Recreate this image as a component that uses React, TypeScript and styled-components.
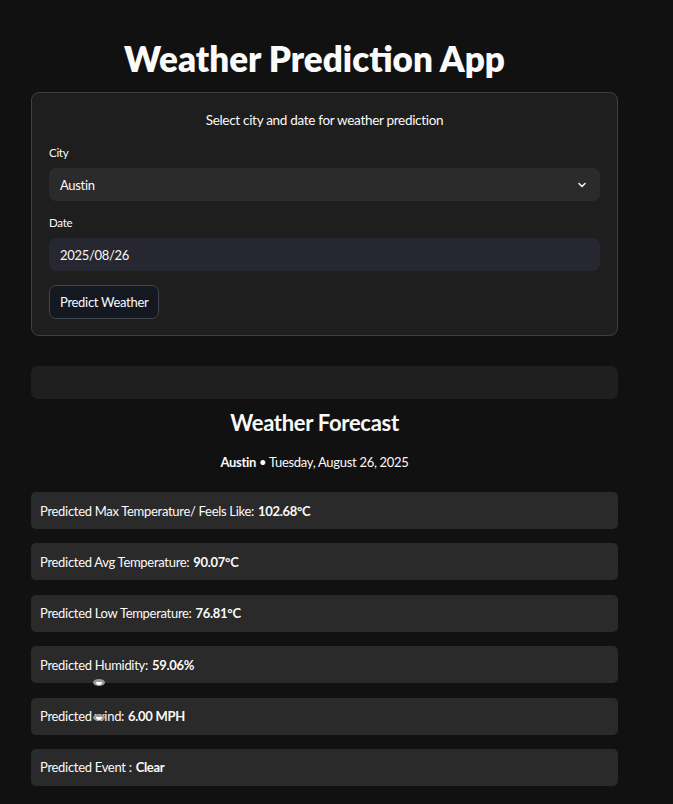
import React from "react";
import styled, { createGlobalStyle } from "styled-components";

const Global = createGlobalStyle`
  html, body { margin: 0; padding: 0; background: #111111; }
  body { font-family: Lato, "Noto Sans", sans-serif; color: #fafafa; letter-spacing: -0.3px; }
`;

const Page = styled.div`
  position: relative;
  width: 673px;
  min-height: 804px;
  box-sizing: border-box;
  padding: 36px 55px 0 31px;
  display: flex;
  flex-direction: column;
`;

const Title = styled.h1`
  margin: 0 0 12px 0;
  text-align: center;
  padding-right: 20px;
  font-size: 35px;
  font-weight: 800;
  line-height: 44px;
  letter-spacing: 0;
  color: #fafafa;
`;

const Form = styled.div`
  border: 1px solid #3f3f45;
  border-radius: 8px;
  background: #1e1e1e;
  padding: 17px 17px 16px 17px;
  display: flex;
  flex-direction: column;
`;

const Caption = styled.div`
  text-align: center;
  font-size: 13.5px;
  line-height: 20px;
  margin-bottom: 15px;
`;

const Label = styled.div`
  font-size: 11.5px;
  line-height: 16px;
  margin-bottom: 7px;
`;

const Field = styled.div<{ $tint?: boolean }>`
  height: 33px;
  border-radius: 7px;
  background: ${(p) => (p.$tint ? "#262730" : "#2b2b2b")};
  display: flex;
  align-items: center;
  justify-content: space-between;
  padding: 0 12px 0 11px;
  font-size: 13px;
  margin-bottom: 14px;
`;

const Button = styled.button`
  align-self: flex-start;
  height: 34px;
  padding: 0 10px;
  border-radius: 7px;
  border: 1px solid #43454d;
  background: #141821;
  color: #fafafa;
  font-family: inherit;
  letter-spacing: inherit;
  font-size: 13px;
`;

const EmptyBar = styled.div`
  margin-top: 30px;
  height: 33px;
  border-radius: 7px;
  background: #1f1f1f;
`;

const SubTitle = styled.h2`
  margin: 12px 0 0 0;
  padding-right: 20px;
  text-align: center;
  font-size: 22px;
  font-weight: 700;
  line-height: 24px;
`;

const Meta = styled.div`
  margin-top: 17px;
  padding-right: 20px;
  text-align: center;
  font-size: 13px;
  line-height: 20px;
  b { font-weight: 700; }
`;

const Cards = styled.div`
  margin-top: 20px;
  display: flex;
  flex-direction: column;
  gap: 14.4px;
`;

const Card = styled.div`
  height: 37px;
  border-radius: 5px;
  background: #2a2a2a;
  display: flex;
  align-items: center;
  padding: 0 9px;
  font-size: 13px;
  b { font-weight: 700; margin-left: 4px; }
`;

const Flake = styled.div<{ $x: number; $y: number }>`
  position: absolute;
  left: ${(p) => p.$x}px;
  top: ${(p) => p.$y}px;
  width: 12px;
  height: 7px;
  border-radius: 50%;
  background: #9a9a9a;
  &::after {
    content: "";
    position: absolute;
    left: 3px;
    top: 3px;
    width: 6px;
    height: 3px;
    border-radius: 0 0 3px 3px;
    background: #ffffff;
  }
`;

const Chevron = () => (
  <svg width="12" height="12" viewBox="0 0 24 24" fill="none" stroke="#fafafa" strokeWidth="3" strokeLinecap="round" strokeLinejoin="round">
    <polyline points="6 9 12 15 18 9" />
  </svg>
);

const rows: [string, string][] = [
  ["Predicted Max Temperature/ Feels Like:", "102.68°C"],
  ["Predicted Avg Temperature:", "90.07°C"],
  ["Predicted Low Temperature:", "76.81°C"],
  ["Predicted Humidity:", "59.06%"],
  ["Predicted wind:", "6.00 MPH"],
  ["Predicted Event :", "Clear"],
];

export default function App() {
  return (
    <>
      <Global />
      <Page>
        <Title>Weather Prediction App</Title>
        <Form>
          <Caption>Select city and date for weather prediction</Caption>
          <Label>City</Label>
          <Field>
            <span>Austin</span>
            <Chevron />
          </Field>
          <Label>Date</Label>
          <Field $tint>
            <span>2025/08/26</span>
          </Field>
          <Button>Predict Weather</Button>
        </Form>
        <EmptyBar />
        <SubTitle>Weather Forecast</SubTitle>
        <Meta>
          <b>Austin</b> • Tuesday, August 26, 2025
        </Meta>
        <Cards>
          {rows.map(([l, v]) => (
            <Card key={l}>
              {l}
              <b>{v}</b>
            </Card>
          ))}
        </Cards>
        <Flake $x={93} $y={679} />
        <Flake $x={93} $y={714} />
      </Page>
    </>
  );
}
